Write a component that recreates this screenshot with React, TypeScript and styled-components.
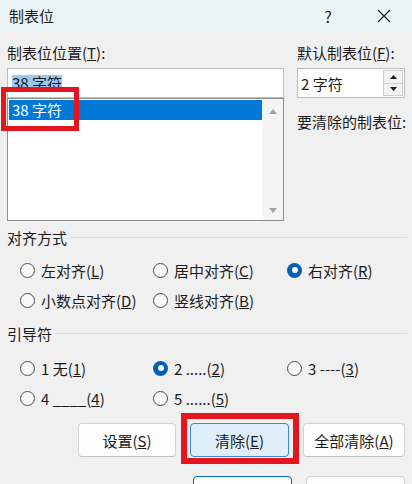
import React from "react";
import styled, { createGlobalStyle } from "styled-components";

const Global = createGlobalStyle`
  html, body { margin: 0; padding: 0; background: #f0f0f0; }
  body {
    font-family: "Noto Sans CJK SC", "Microsoft YaHei", "Noto Sans", sans-serif;
    font-size: 15px;
    color: #1b1b1b;
  }
  #root { width: 412px; height: 484px; }
`;

const Dialog = styled.div`
  position: relative;
  width: 412px;
  height: 484px;
  overflow: hidden;
  background: #f0f0f0;
`;

const TitleBar = styled.div`
  display: flex;
  align-items: center;
  height: 32px;
  background: #eaf4f7;
`;

const Title = styled.div`
  flex: 1;
  padding-left: 9px;
  line-height: 20px;
`;

const TitleButton = styled.div`
  width: 56px;
  height: 32px;
  display: flex;
  align-items: center;
  justify-content: center;
  font-size: 16px;
  color: #1b1b1b;
`;

const Body = styled.div`
  display: flex;
  flex-direction: column;
  padding: 11px 7px 0 7px;
`;

const TopRow = styled.div`
  display: flex;
  gap: 13px;
`;

const Column = styled.div<{ $w: number }>`
  width: ${(p) => p.$w}px;
  display: flex;
  flex-direction: column;
`;

const FieldLabel = styled.div<{ $mt?: number }>`
  height: 20px;
  line-height: 20px;
  margin-top: ${(p) => p.$mt ?? 0}px;
  margin-bottom: 5px;
  white-space: nowrap;
`;

const TextInput = styled.div`
  box-sizing: border-box;
  height: 30px;
  border: 1px solid #bdbdbd;
  background: #fff;
  display: flex;
  align-items: center;
  padding-left: 4px;
`;

const Selected = styled.span`
  background: #99c9ef;
  line-height: 16px;
`;

const ListBox = styled.div`
  box-sizing: border-box;
  height: 123px;
  border: 1px solid #8f8f8f;
  background: #fff;
  display: flex;
`;

const ListItems = styled.div`
  flex: 1;
  padding: 1px 0 0 1px;
`;

const ListItem = styled.div`
  height: 20px;
  line-height: 20px;
  padding-left: 3px;
  background: #0078d7;
  color: #fff;
`;

const ScrollBar = styled.div`
  width: 21px;
  background: #f4f4f4;
  display: flex;
  flex-direction: column;
  justify-content: space-between;
  align-items: center;
  padding: 10px 0 7px;
  box-sizing: border-box;
`;

const Spinner = styled.div`
  box-sizing: border-box;
  height: 30px;
  border: 1px solid #bdbdbd;
  background: #fff;
  display: flex;
  align-items: center;
`;

const SpinText = styled.div`
  flex: 1;
  padding-left: 3px;
`;

const SpinButtons = styled.div`
  width: 18px;
  align-self: stretch;
  margin: 1px 1px 1px 0;
  display: flex;
  flex-direction: column;
  border: 1px solid #cfcfcf;
  background: #f3f3f3;
`;

const SpinHalf = styled.div<{ $top?: boolean }>`
  flex: 1;
  display: flex;
  align-items: center;
  justify-content: center;
  border-bottom: ${(p) => (p.$top ? "1px solid #cfcfcf" : "none")};
`;

const SectionHeader = styled.div<{ $mt: number }>`
  display: flex;
  align-items: center;
  height: 20px;
  line-height: 20px;
  margin-top: ${(p) => p.$mt}px;
`;

const SectionLine = styled.div`
  flex: 1;
  height: 1px;
  background: #dadada;
  margin-left: 3px;
  margin-top: -2px;
  margin-right: -2px;
`;

const RadioGrid = styled.div<{ $mt: number }>`
  display: grid;
  grid-template-columns: 133px 134px 1fr;
  grid-auto-rows: 30px;
  padding-left: 13px;
  margin-top: ${(p) => p.$mt}px;
`;

const RadioItem = styled.div`
  display: flex;
  align-items: center;
  gap: 6px;
  white-space: nowrap;
`;

const RadioCircle = styled.span<{ $on?: boolean }>`
  box-sizing: border-box;
  width: 15px;
  height: 15px;
  border-radius: 50%;
  flex: none;
  display: flex;
  align-items: center;
  justify-content: center;
  background: ${(p) => (p.$on ? "#005fb8" : "#fafafa")};
  border: ${(p) => (p.$on ? "none" : "1px solid #4a4a4a")};
  &::after {
    content: "";
    display: ${(p) => (p.$on ? "block" : "none")};
    width: 6px;
    height: 6px;
    border-radius: 50%;
    background: #fff;
  }
`;

const ButtonRow = styled.div<{ $mt: number }>`
  display: flex;
  justify-content: flex-end;
  gap: 14px;
  margin-top: ${(p) => p.$mt}px;
`;

const Button = styled.div<{ $w: number; $variant?: "active" | "default" }>`
  box-sizing: border-box;
  width: ${(p) => p.$w}px;
  height: 34px;
  border-radius: 4px;
  display: flex;
  align-items: center;
  justify-content: center;
  background: ${(p) => (p.$variant === "active" ? "#e0eef9" : "#fdfdfd")};
  border: 1px solid
    ${(p) =>
      p.$variant === "active"
        ? "#3d86d4"
        : p.$variant === "default"
        ? "#0067c0"
        : "#d2d2d2"};
  border-bottom-color: ${(p) =>
    p.$variant === "active" ? "#3d86d4" : p.$variant === "default" ? "#0067c0" : "#c0c0c0"};
  white-space: nowrap;
`;

const Mark = styled.div<{ $x: number; $y: number; $w: number; $h: number; $t: number }>`
  position: absolute;
  left: ${(p) => p.$x}px;
  top: ${(p) => p.$y}px;
  width: ${(p) => p.$w}px;
  height: ${(p) => p.$h}px;
  box-sizing: border-box;
  border: ${(p) => p.$t}px solid #e3161f;
  pointer-events: none;
`;

const Tri = ({ up, color, w = 8, h = 5 }: { up?: boolean; color: string; w?: number; h?: number }) => (
  <svg width={w} height={h} viewBox={`0 0 ${w} ${h}`}>
    <polygon
      points={up ? `0,${h} ${w},${h} ${w / 2},0` : `0,0 ${w},0 ${w / 2},${h}`}
      fill={color}
    />
  </svg>
);

type R = { label: React.ReactNode; on?: boolean };

const Radio = ({ label, on }: R) => (
  <RadioItem>
    <RadioCircle $on={on} />
    <span>{label}</span>
  </RadioItem>
);

export default function App() {
  return (
    <Dialog>
      <Global />
      <TitleBar>
        <Title>制表位</Title>
        <TitleButton>?</TitleButton>
        <TitleButton>
          <svg width="14" height="14" viewBox="0 0 14 14">
            <path d="M1 1 L13 13 M13 1 L1 13" stroke="#1b1b1b" strokeWidth="1.1" />
          </svg>
        </TitleButton>
      </TitleBar>
      <Body>
        <TopRow>
          <Column $w={278}>
            <FieldLabel>
              制表位位置(<u>T</u>):
            </FieldLabel>
            <TextInput>
              <Selected>38 字符</Selected>
            </TextInput>
            <ListBox>
              <ListItems>
                <ListItem>38 字符</ListItem>
              </ListItems>
              <ScrollBar>
                <Tri up color="#a3a3a3" />
                <Tri color="#a3a3a3" />
              </ScrollBar>
            </ListBox>
          </Column>
          <Column $w={108}>
            <FieldLabel>
              默认制表位(<u>F</u>):
            </FieldLabel>
            <Spinner>
              <SpinText>2 字符</SpinText>
              <SpinButtons>
                <SpinHalf $top>
                  <Tri up color="#1b1b1b" w={7} h={4} />
                </SpinHalf>
                <SpinHalf>
                  <Tri color="#1b1b1b" w={7} h={4} />
                </SpinHalf>
              </SpinButtons>
            </Spinner>
            <FieldLabel $mt={14}>要清除的制表位:</FieldLabel>
          </Column>
        </TopRow>

        <SectionHeader $mt={7}>
          对齐方式
          <SectionLine />
        </SectionHeader>
        <RadioGrid $mt={7}>
          <Radio label={<>左对齐(<u>L</u>)</>} />
          <Radio label={<>居中对齐(<u>C</u>)</>} />
          <Radio on label={<>右对齐(<u>R</u>)</>} />
          <Radio label={<>小数点对齐(<u>D</u>)</>} />
          <Radio label={<>竖线对齐(<u>B</u>)</>} />
        </RadioGrid>

        <SectionHeader $mt={9}>
          引导符
          <SectionLine />
        </SectionHeader>
        <RadioGrid $mt={9}>
          <Radio label={<>1 无(<u>1</u>)</>} />
          <Radio on label={<>2 .....(<u>2</u>)</>} />
          <Radio label={<>3 ----(<u>3</u>)</>} />
          <Radio label={<>4 ____(<u>4</u>)</>} />
          <Radio label={<>5 ......(<u>5</u>)</>} />
        </RadioGrid>

        <ButtonRow $mt={10}>
          <Button $w={98}>
            设置(<u>S</u>)
          </Button>
          <Button $w={99} $variant="active">
            清除(<u>E</u>)
          </Button>
          <Button $w={102}>
            全部清除(<u>A</u>)
          </Button>
        </ButtonRow>
        <ButtonRow $mt={19}>
          <Button $w={99} $variant="default" />
          <Button $w={99} />
        </ButtonRow>
      </Body>
      <Mark $x={1} $y={87} $w={78} $h={44} $t={5} />
      <Mark $x={181} $y={413} $w={118} $h={51} $t={6} />
    </Dialog>
  );
}
